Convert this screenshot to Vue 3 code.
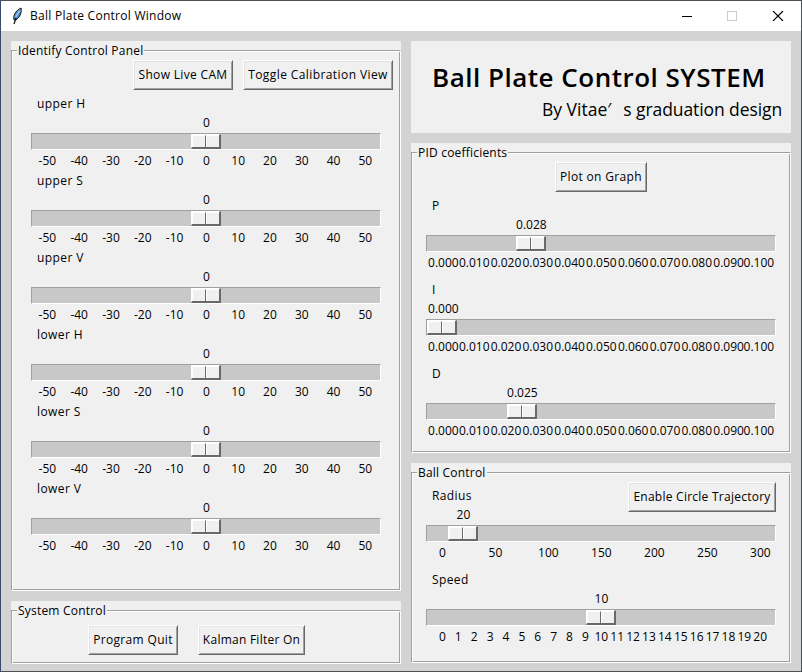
<script setup>
const tens = ['-50', '-40', '-30', '-20', '-10', '0', '10', '20', '30', '40', '50']
const pidTicks = Array.from({ length: 11 }, (_, i) => (i / 100).toFixed(3))
const hsv = ['upper H', 'upper S', 'upper V', 'lower H', 'lower S', 'lower V'].map((label) => ({ label, value: '0', ratio: 0.5, ticks: tens }))
const pid = [
  { label: 'P', value: '0.028', ratio: 0.28, ticks: pidTicks },
  { label: 'I', value: '0.000', ratio: 0, ticks: pidTicks },
  { label: 'D', value: '0.025', ratio: 0.25, ticks: pidTicks }
]
const ball = [
  { label: 'Radius', value: '20', ratio: 20 / 300, ticks: ['0', '50', '100', '150', '200', '250', '300'] },
  { label: 'Speed', value: '10', ratio: 0.5, ticks: Array.from({ length: 21 }, (_, i) => String(i)) }
]
const groups = { hsv, pid, ball }
const offset = (s) => Math.round(s.ratio * 318 + 0.01)
const valueCenter = (s) => Math.max(offset(s) + 16, s.value.length > 3 ? 17 : 0) + 0.4
</script>

<template>
  <div class="window">
    <header class="titlebar">
      <svg class="feather" width="12" height="18" viewBox="0 0 12 18">
        <path d="M3 13C2 9 4 4 10 1C11 5 9 11 4.500 13Z" fill="#4d88c6" stroke="#151515" stroke-width="1" />
        <path d="M5 11L3 17" fill="none" stroke="#111" stroke-width="1.200" />
        <path d="M9 3L4.500 10" fill="none" stroke="#9cc6ee" stroke-width="1.400" />
      </svg>
      <span class="title">Ball Plate Control Window</span>
      <svg class="controls" width="102" height="10" viewBox="0 0 102 10" shape-rendering="crispEdges">
        <path d="M0 5.500H10" stroke="#000" />
        <rect x="45.500" y="0.500" width="9" height="9" fill="none" stroke="#ccc" />
        <path d="M91 0L101 10M101 0L91 10" stroke="#000" stroke-width="1.200" shape-rendering="auto" />
      </svg>
    </header>

    <main class="body">
      <div class="column left">
        <section class="panel identify">
          <div class="frame">
            <h2 class="legend">Identify Control Panel</h2>
            <div class="buttons end">
              <button class="btn b-show">Show Live CAM</button>
              <button class="btn b-toggle">Toggle Calibration View</button>
            </div>
            <div class="scales">
              <div v-for="s in groups.hsv" :key="s.label" class="scale">
                <div class="name">{{ s.label }}</div>
                <div class="value"><span :style="{ marginLeft: valueCenter(s) + 'px' }" class="point">{{ s.value }}</span></div>
                <div class="trough"><div class="thumb" :style="{ marginLeft: offset(s) + 'px' }"><i></i><i></i></div></div>
                <div class="ticks"><span v-for="t in s.ticks" :key="t" class="point">{{ t }}</span></div>
              </div>
            </div>
          </div>
        </section>
        <section class="panel system">
          <div class="frame">
            <h2 class="legend">System Control</h2>
            <div class="buttons spaced">
              <button class="btn b-quit">Program Quit</button>
              <button class="btn b-kalman">Kalman Filter On</button>
            </div>
          </div>
        </section>
      </div>

      <div class="column right">
        <section class="banner">
          <h1>Ball Plate Control SYSTEM</h1>
          <p><span>By Vitae</span><span class="quote">′</span><span class="rest">s graduation design</span></p>
        </section>
        <section class="panel pid">
          <div class="frame">
            <h2 class="legend">PID coefficients</h2>
            <div class="buttons center"><button class="btn b-plot">Plot on Graph</button></div>
            <div class="scales">
              <div v-for="s in groups.pid" :key="s.label" class="scale">
                <div class="name">{{ s.label }}</div>
                <div class="value"><span :style="{ marginLeft: valueCenter(s) + 'px' }" class="point">{{ s.value }}</span></div>
                <div class="trough"><div class="thumb" :style="{ marginLeft: offset(s) + 'px' }"><i></i><i></i></div></div>
                <div class="ticks wide"><span v-for="t in s.ticks" :key="t" class="point">{{ t }}</span></div>
              </div>
            </div>
          </div>
        </section>
        <section class="panel ball">
          <div class="frame">
            <h2 class="legend">Ball Control</h2>
            <div class="buttons end"><button class="btn b-circle">Enable Circle Trajectory</button></div>
            <div class="scales">
              <div v-for="s in groups.ball" :key="s.label" class="scale">
                <div class="name">{{ s.label }}</div>
                <div class="value"><span :style="{ marginLeft: valueCenter(s) + 'px' }" class="point">{{ s.value }}</span></div>
                <div class="trough"><div class="thumb" :style="{ marginLeft: offset(s) + 'px' }"><i></i><i></i></div></div>
                <div class="ticks"><span v-for="t in s.ticks" :key="t" class="point">{{ t }}</span></div>
              </div>
            </div>
          </div>
        </section>
      </div>
    </main>
  </div>
</template>

<style>
html, body { margin: 0; overflow: hidden; }
</style>

<style scoped>
* { box-sizing: border-box; }
h1, h2, p { margin: 0; font-weight: 400; }
.window { width: 802px; height: 672px; border: 1px solid #4b5257; border-left-color: #344d6b; background: #d3d3d3; color: #000; font-family: "Open Sans", "Noto Sans", sans-serif; font-size: 12px; line-height: 18px; }
.titlebar { height: 30px; background: #fff; display: flex; align-items: center; }
.feather { margin-left: 10px; }
.title { margin-left: 7px; width: 155px; white-space: nowrap; letter-spacing: 0.27px; }
.controls { margin-left: auto; margin-right: 17px; }
.body { display: flex; gap: 10px; padding: 10px; }
.column { display: flex; flex-direction: column; gap: 10px; }
.left { width: 390px; }
.right { width: 380px; }
.panel { background: #f0f0f0; padding-top: 9px; }
.identify { height: 550px; }
.system { height: 63px; }
.pid { height: 310px; }
.ball { height: 200px; }
.frame { height: 100%; border: 1px solid; border-color: #a0a0a0 #fff #fff #a0a0a0; box-shadow: inset 1px 1px #fff, inset -1px -1px #a0a0a0; }
.legend { width: fit-content; height: 18px; margin: -9px 0 0 5px; padding: 0 1px; background: #f0f0f0; font-size: 12px; line-height: 18px; white-space: nowrap; letter-spacing: 0.2px; }
.buttons { display: flex; height: 30px; gap: 10px; }
.end { justify-content: flex-end; padding-right: 7px; }
.right .end { padding-right: 14px; }
.spaced { gap: 20px; padding-left: 76px; margin-top: 5px; }
.center { padding-left: 143px; }
.btn { height: 30px; padding: 0; border: 1px solid; border-color: #fff #696969 #696969 #fff; box-shadow: inset 1px 1px #e3e3e3, inset -1px -1px #a0a0a0; border-radius: 0; background: #f0f0f0; color: #000; font: inherit; white-space: nowrap; display: flex; align-items: center; justify-content: center; letter-spacing: 0.33px; }
.b-show { width: 100px; }
.b-toggle { width: 150px; letter-spacing: 0.41px; }
.b-quit { width: 90px; }
.b-kalman { width: 107px; letter-spacing: 0.25px; }
.b-plot { width: 92px; }
.b-circle { width: 148px; letter-spacing: 0.25px; }
.scales { display: flex; flex-direction: column; width: 350px; margin: 5px 0 0 19px; }
.right .scales { gap: 7px; margin-left: 14px; }
.ball .scales { margin-top: -25px; width: 350px; }
.name { height: 19px; line-height: 18px; padding-left: 6px; letter-spacing: 0.4px; }
.value { height: 19px; line-height: 18px; display: flex; }
.trough { height: 17px; border: 1px solid; border-color: #a0a0a0 #fff #fff #a0a0a0; background: #c8c8c8; }
.thumb { width: 30px; height: 15px; display: flex; border-style: solid; border-width: 1px 2px 2px 1px; border-color: #fff #696969 #696969 #fff; background: #f0f0f0; }
.thumb i { flex: 1; border-style: solid; border-color: #fff; border-width: 1px 0 0 1px; }
.thumb i:first-child { flex: 0 0 14px; border-right: 1px solid #696969; }
.ticks { display: flex; justify-content: space-between; height: 22px; padding: 2px 15.600px 0 16.400px; line-height: 18px; }
.point { width: 0; display: flex; justify-content: center; white-space: nowrap; }
.wide .point:first-child { margin-left: 1px; margin-right: -1px; }
.wide .point:last-child { margin-right: 1.500px; margin-left: -1.500px; }
.banner { height: 92px; background: #f0f0f0; padding-top: 19px; }
h1 { padding-left: 21px; font-size: 26px; line-height: 34px; font-weight: 600; white-space: nowrap; letter-spacing: 0.5px; }
.banner p { padding-left: 131px; display: flex; font-size: 17.500px; line-height: 30px; white-space: nowrap; }
.quote { width: 16px; }
.rest { letter-spacing: -0.08px; }
</style>
